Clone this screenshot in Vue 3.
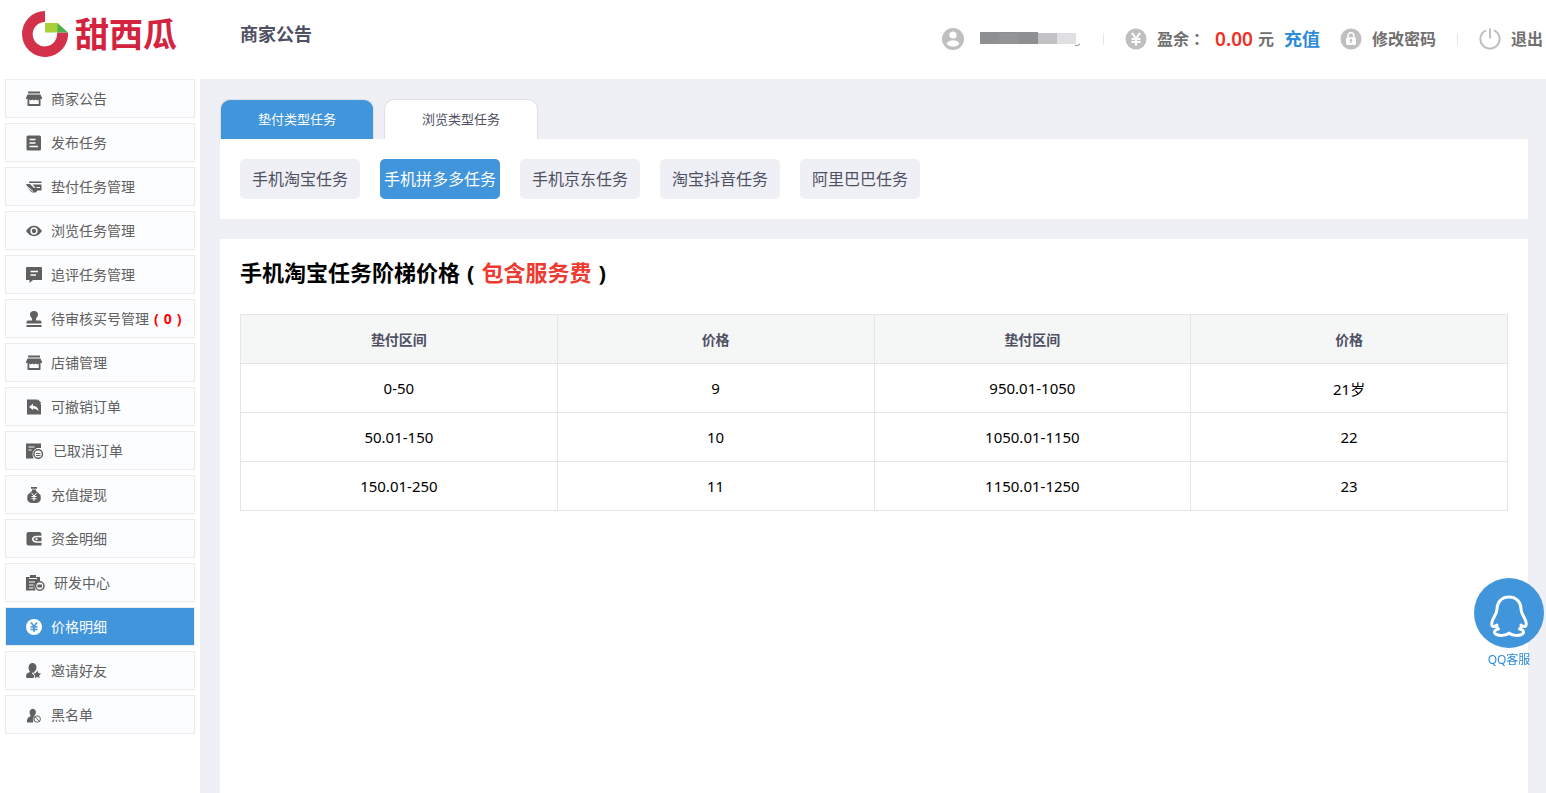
<script setup>
import { ref } from 'vue'

const menu = [
  { label: '商家公告', icon: 'shop' },
  { label: '发布任务', icon: 'doc' },
  { label: '垫付任务管理', icon: 'pay' },
  { label: '浏览任务管理', icon: 'eye' },
  { label: '追评任务管理', icon: 'comment' },
  { label: '待审核买号管理', icon: 'stamp', count: 0 },
  { label: '店铺管理', icon: 'shop' },
  { label: '可撤销订单', icon: 'undo' },
  { label: '已取消订单', icon: 'cancel', width: 18 },
  { label: '充值提现', icon: 'bag' },
  { label: '资金明细', icon: 'wallet' },
  { label: '研发中心', icon: 'clipboard', width: 19 },
  { label: '价格明细', icon: 'yen' },
  { label: '邀请好友', icon: 'invite' },
  { label: '黑名单', icon: 'block' },
]
const current = ref('价格明细')

const tabs = ['垫付类型任务', '浏览类型任务']
const activeTab = ref('垫付类型任务')

const platforms = ['手机淘宝任务', '手机拼多多任务', '手机京东任务', '淘宝抖音任务', '阿里巴巴任务']
const activePlatform = ref('手机拼多多任务')

const columns = ['垫付区间', '价格', '垫付区间', '价格']
const rows = [
  ['0-50', '9', '950.01-1050', '21岁'],
  ['50.01-150', '10', '1050.01-1150', '22'],
  ['150.01-250', '11', '1150.01-1250', '23'],
]
</script>

<template>
  <div class="page">
    <header class="header">
      <a class="logo" href="#">
        <svg width="46" height="46" viewBox="0 0 46 46" aria-hidden="true">
          <path d="M23 0A23 23 0 1 0 46 21.500H35A12.200 12.200 0 1 1 23 11Z" fill="#d3304a" />
          <path d="M23 12H36V21.500H23Z" fill="#a9d03a" />
          <path d="M35.500 12L46 21.500H35.500Z" fill="#4fae4b" />
        </svg>
        <span class="brand">甜西瓜</span>
      </a>
      <h1 class="page-title">商家公告</h1>
      <div class="account">
        <div class="user">
          <svg width="22" height="22" viewBox="0 0 22 22" aria-hidden="true">
            <circle cx="11" cy="11" r="11" fill="#bfbfbf" />
            <circle cx="11" cy="7" r="3.600" fill="#fff" />
            <path d="M4.500 15.500Q7 12.300 11 12.300T17.500 15.500Q15 18.800 11 18.800T4.500 15.500Z" fill="#fff" />
          </svg>
          <svg class="masked" width="102" height="16" viewBox="0 0 102 16" aria-hidden="true">
            <path d="M0 1H58V13H0Z" fill="#8e8f91" />
            <path d="M19 2H38V13H19Z" fill="#939496" />
            <path d="M58 2H77V13H58Z" fill="#c2c2c4" />
            <path d="M77 2H96V13H77Z" fill="#e0e0e2" />
            <path d="M95 14.500Q98 15 100 13" stroke="#888" fill="none" />
          </svg>
        </div>
        <i class="divider"></i>
        <div class="balance">
          <svg width="22" height="22" viewBox="0 0 22 22" aria-hidden="true">
            <circle cx="11" cy="11" r="10.500" fill="#bfbfbf" />
            <path d="M7 5L11 10.500L15 5M11 10V17.500M6.500 11H15.500M6.500 14H15.500" stroke="#fff" stroke-width="2" fill="none" />
          </svg>
          <span class="caption">盈余<span class="colon">：</span></span>
          <strong class="amount">0.00</strong>
          <span class="unit">元</span>
          <a class="recharge" href="#">充值</a>
        </div>
        <a class="link password" href="#">
          <svg width="22" height="22" viewBox="0 0 22 22" aria-hidden="true">
            <circle cx="11" cy="11" r="10.500" fill="#bfbfbf" />
            <path d="M8.200 9.500V7.500A2.800 2.800 0 0 1 13.800 7.500V9.500" stroke="#fff" stroke-width="1.500" fill="none" />
            <rect x="6" y="9.200" width="10" height="7.800" rx="1.500" fill="#fff" />
            <circle cx="11" cy="12.300" r="1.300" fill="#bfbfbf" />
            <path d="M11 12V15" stroke="#bfbfbf" stroke-width="1.200" />
          </svg>
          <span>修改密码</span>
        </a>
        <i class="divider"></i>
        <a class="link logout" href="#">
          <svg width="22" height="22" viewBox="0 0 22 22" aria-hidden="true">
            <path d="M7 2.300A9.600 9.600 0 1 0 15 2.300M11 0.500V10.500" stroke="#bfbfbf" stroke-width="2" fill="none" />
          </svg>
          <span>退出</span>
        </a>
      </div>
    </header>

    <div class="body">
      <nav class="sidebar">
        <a
          v-for="item in menu"
          :key="item.label"
          href="#"
          class="item"
          :class="{ active: item.label === current }"
          @click.prevent="current = item.label"
        >
          <svg :width="item.width || 16" height="16" :viewBox="`0 0 ${item.width || 16} 16`" fill="currentColor" aria-hidden="true">
            <g v-if="item.icon === 'shop'">
              <path d="M2 0.500H14V2.500H2ZM1.500 3.500H14.500L16 7V8H14.500V15H1.500V8H0V7ZM3.300 8.500V13H12.700V8.500L11.200 9.500L9.600 8.500L8 9.500L6.400 8.500L4.800 9.500Z" fill-rule="evenodd" />
            </g>
            <g v-else-if="item.icon === 'doc'">
              <rect x="0.500" y="0.500" width="14.500" height="15" rx="1.500" />
              <path d="M3.500 4.500H9.500M3.500 8H9.500M3.500 11.500H12" class="cut" />
            </g>
            <g v-else-if="item.icon === 'pay'">
              <path d="M3 2.500H15.500V4H3ZM0 5H4L8 9L9.500 8.500L6.500 5.500H15.500V11.500H11.500L10 13.500H6L4 11.500Z" />
              <path d="M2.500 8.500L7 12.500M10.500 8.500H14" class="cut thin" />
            </g>
            <g v-else-if="item.icon === 'eye'">
              <path d="M0 8Q3.500 2.800 8 2.800T16 8Q12.500 13.200 8 13.200T0 8Z" />
              <circle cx="8" cy="8" r="2.900" class="cut" />
              <circle cx="8" cy="8" r="1.800" />
            </g>
            <g v-else-if="item.icon === 'comment'">
              <path d="M1 0H15Q16 0 16 1V13H7L3.500 16V13H0V1Q0 0 1 0Z" />
              <path d="M4.500 4.500H12M4.500 8H10" class="cut" />
            </g>
            <g v-else-if="item.icon === 'stamp'">
              <path d="M6 7.500Q4 5.500 4 3.700A4 3.700 0 0 1 12 3.700Q12 5.500 10 7.500V9.500H14Q15.500 9.500 15.500 11V12.500H0.500V11Q0.500 9.500 2 9.500H6ZM0.500 14H15.500V16H0.500Z" />
            </g>
            <g v-else-if="item.icon === 'undo'">
              <path d="M1 0.500H10.500L15 5V15.500H1ZM11.500 0L15.500 4H11.500Z" />
              <path d="M3 8L7 4.800V6.800Q12 7 12.500 12Q10.500 9.500 7 9.500V11Z" class="hole" />
            </g>
            <g v-else-if="item.icon === 'cancel'">
              <path d="M0 0.500H15V5H11Q6.500 7 6.500 11.500L7.500 15.500H0Z" />
              <path d="M2.500 4H8.500M2.500 7H5.500" class="cut thin" />
              <circle cx="12.200" cy="11" r="4.300" class="ring" />
              <path d="M10 10.500H14.500M10 12.500H14.500" class="line" />
            </g>
            <g v-else-if="item.icon === 'bag'">
              <path d="M5 0H11V1.800H5ZM6 2.500H10V4L14.500 8Q16 16 10 16H6Q0 16 1.500 8L6 4Z" />
              <path d="M5.500 6L8 9L10.500 6M8 8V14M5.500 9.500H10.500M5.500 11.700H10.500" class="cut thin" />
            </g>
            <g v-else-if="item.icon === 'wallet'">
              <path d="M2.500 1H13.500Q15.500 1 15.500 3.500V14.500H2.500Q0.500 14.500 0.500 12.500V3Q0.500 1 2.500 1Z" />
              <path d="M16 5.500H10.500Q7.500 5.500 6.500 8Q7.500 11 10.500 11H16" class="cut" />
              <circle cx="10.500" cy="8.200" r="1.100" class="hole" />
            </g>
            <g v-else-if="item.icon === 'clipboard'">
              <path d="M0 2H4V0H10V2H14V7Q9 7 8.500 11.500L9.500 15.500H0Z" />
              <path d="M3 3.500H11M3 7H9M3 10H7.500M3 13H7.500" class="cut thin" />
              <circle cx="13.800" cy="11" r="4.200" class="ring" />
              <path d="M11.500 9.500H16V12.500H11.500Z" />
            </g>
            <g v-else-if="item.icon === 'yen'">
              <circle cx="8" cy="8" r="8" />
              <path d="M5 3.500L8 7.500L11 3.500M8 7V13M4.500 8H11.500M4.500 10.500H11.500" class="yen" />
            </g>
            <g v-else-if="item.icon === 'invite'">
              <path d="M2.500 4.500A4 4.500 0 0 1 10.500 4.500Q10.500 7 8.500 8.500L9 15H1Q0 15 0 13Q0 10 4 9Q2.500 7 2.500 4.500Z" />
              <path d="M11.200 6.500L12.800 9.800L16 10.200L13.700 12.500L14.300 16L11.200 14.300L8 16L8.600 12.500L6.300 10.200L9.600 9.800Z" class="outlined" />
            </g>
            <g v-else>
              <path d="M3.500 4.500A3.500 4.300 0 0 1 10 4.500Q10 7 8.500 8.500Q7 10 7.200 15.500H1.500Q0.500 15.500 1 13Q1.500 10 4.700 9Q3.500 7 3.500 4.500Z" />
              <circle cx="11.200" cy="12" r="3.200" class="ring thin" />
              <path d="M9 9.800L13.500 14.300" class="line" />
            </g>
          </svg>
          <span class="item-label">{{ item.label }}<b v-if="item.count !== undefined" class="count"><span class="paren">(</span>{{ item.count }}<span class="paren">)</span></b></span>
        </a>
      </nav>

      <main class="main">
        <div class="tabs" role="tablist">
          <button
            v-for="tab in tabs"
            :key="tab"
            type="button"
            role="tab"
            class="tab"
            :class="{ active: tab === activeTab }"
            :aria-selected="tab === activeTab"
            @click="activeTab = tab"
          >{{ tab }}</button>
        </div>
        <section class="platforms">
          <button
            v-for="name in platforms"
            :key="name"
            type="button"
            class="platform"
            :class="{ active: name === activePlatform }"
            @click="activePlatform = name"
          >{{ name }}</button>
        </section>
        <section class="prices">
          <h2 class="heading">手机淘宝任务阶梯价格<span class="paren">(</span><em>包含服务费</em><span class="paren">)</span></h2>
          <table class="table">
            <thead>
              <tr><th v-for="(name, i) in columns" :key="i" scope="col">{{ name }}</th></tr>
            </thead>
            <tbody>
              <tr v-for="row in rows" :key="row[0]">
                <td v-for="(cell, i) in row" :key="i">{{ cell }}</td>
              </tr>
            </tbody>
          </table>
        </section>
      </main>
    </div>

    <a class="service" href="#">
      <span class="bubble">
        <svg width="40" height="44" viewBox="0 0 40 44" fill="none" stroke="#fff" stroke-width="3" stroke-linejoin="round" stroke-linecap="round" aria-hidden="true">
          <path d="M20 3C12 3 8 9 8 15C8 20 4 23 3 28C2 33 4.500 33.500 8 31C7 33 8 34 9.500 35C5.500 35.500 4.500 38 6.500 40C9 42 17 42 20 39C23 42 31 42 33.500 40C35.500 38 34.500 35.500 30.500 35C32 34 33 33 32 31C35.500 33.500 38 33 37 28C36 23 32 20 32 15C32 9 28 3 20 3Z" />
        </svg>
      </span>
      <span>QQ客服</span>
    </a>
  </div>
</template>

<style>
body {
  margin: 0;
  background: #fff;
}
</style>

<style scoped>
.page {
  display: flex;
  flex-direction: column;
  min-height: 100vh;
  font-family: "Noto Sans", "Noto Sans CJK SC", sans-serif;
  font-size: 14px;
  color: #000;
}
.page *,
.page {
  box-sizing: border-box;
}
a {
  color: inherit;
  text-decoration: none;
}
svg {
  display: block;
  flex: none;
}
button {
  padding: 0 0 2px;
  border: 0;
  font-family: inherit;
  cursor: pointer;
}

.header {
  display: flex;
  align-items: flex-start;
  height: 79px;
  padding-right: 3px;
}
.logo {
  display: flex;
  align-items: center;
  gap: 7px;
  width: 200px;
  padding: 11px 0 0 22px;
}
.brand {
  font-size: 34px;
  line-height: 46px;
  font-weight: 700;
  color: #d4233f;
}
.page-title {
  margin: 20px 0 0 40px;
  font-size: 18px;
  line-height: 28px;
  color: #505063;
}
.account {
  display: flex;
  align-items: center;
  margin-left: auto;
  padding-top: 24px;
  font-size: 16px;
  line-height: 28px;
  font-weight: 700;
  color: #707070;
  white-space: nowrap;
}
.user,
.balance,
.link {
  display: flex;
  align-items: center;
}
.user {
  gap: 16px;
}
.divider {
  width: 1px;
  height: 12px;
  margin: 0 21px;
  background: #e6e6ee;
}
.colon {
  font-family: "Noto Sans CJK TC", sans-serif;
}
.caption,
.link span {
  margin-left: 10px;
}
.amount {
  margin-left: 10px;
  font-size: 19px;
  font-weight: 600;
  color: #ee3127;
}
.unit {
  margin: 0 10px 0 5px;
}
.recharge {
  font-size: 18px;
  color: #2e8bd8;
}
.password {
  margin-left: 20px;
}

.body {
  display: flex;
  flex: 1;
}
.sidebar {
  display: flex;
  flex: none;
  flex-direction: column;
  gap: 5px;
  width: 200px;
  padding: 0 5px;
}
.item {
  display: flex;
  align-items: center;
  gap: 9px;
  height: 39px;
  padding-left: 20px;
  border: 1px solid #ececee;
  background: #fcfdff;
  color: #606060;
  white-space: nowrap;
}
.item.active {
  background: #4195db;
  color: #fff;
}
.item-label {
  padding-bottom: 2px;
}
.count {
  color: #f00;
}
.count .paren {
  padding: 0 5px;
}
.cut {
  fill: none;
  stroke: #fcfdff;
  stroke-width: 1.500;
}
.cut.thin {
  stroke-width: 1;
}
.hole {
  fill: #fcfdff;
}
.ring {
  fill: #fcfdff;
  stroke: currentColor;
  stroke-width: 1.500;
}
.ring.thin {
  stroke-width: 1;
}
.line {
  fill: none;
  stroke: currentColor;
}
.yen {
  fill: none;
  stroke: #4195db;
  stroke-width: 1.500;
}
.outlined {
  stroke: #fcfdff;
}

.main {
  display: flex;
  flex: 1;
  flex-direction: column;
  padding: 20px 18px 0 20px;
  background: #eff0f5;
}
.tabs {
  display: flex;
  gap: 10px;
}
.tab {
  width: 154px;
  height: 40px;
  border: 1px solid #dedfe5;
  border-bottom: 0;
  border-radius: 10px 10px 0 0;
  background: #fff;
  font-size: 13px;
  color: #505063;
}
.tab.active {
  background: #4195db;
  color: #fff;
}
.platforms {
  display: flex;
  flex-wrap: wrap;
  gap: 20px;
  padding: 20px;
  background: #fff;
}
.platform {
  width: 120px;
  height: 40px;
  border-radius: 5px;
  background: #eff0f5;
  font-size: 16px;
  color: #505063;
  white-space: nowrap;
}
.platform.active {
  background: #4195db;
  color: #fff;
}
.prices {
  flex: 1;
  margin-top: 20px;
  padding: 19px 20px 20px;
  background: #fff;
}
.heading {
  margin: 0 0 28px;
  font-size: 22px;
  line-height: 28px;
}
.heading em {
  font-style: normal;
  color: #ee3a30;
}
.heading .paren {
  padding: 0 7px;
}
.table {
  width: 100%;
  border-collapse: collapse;
  table-layout: fixed;
}
.table th,
.table td {
  height: 49px;
  padding: 0;
  border: 1px solid #e5e5e5;
  text-align: center;
}
.table th {
  background: #f5f7f7;
  font-size: 14px;
  color: #505063;
}
.table td {
  font-size: 15px;
}

.service {
  position: fixed;
  right: 2px;
  bottom: 124px;
  display: flex;
  flex-direction: column;
  align-items: center;
  gap: 3px;
  font-size: 12px;
  line-height: 18px;
  color: #2e8bd8;
}
.bubble {
  display: flex;
  align-items: center;
  justify-content: center;
  width: 70px;
  height: 70px;
  padding-top: 6px;
  border-radius: 50%;
  background: #4195db;
}
</style>
